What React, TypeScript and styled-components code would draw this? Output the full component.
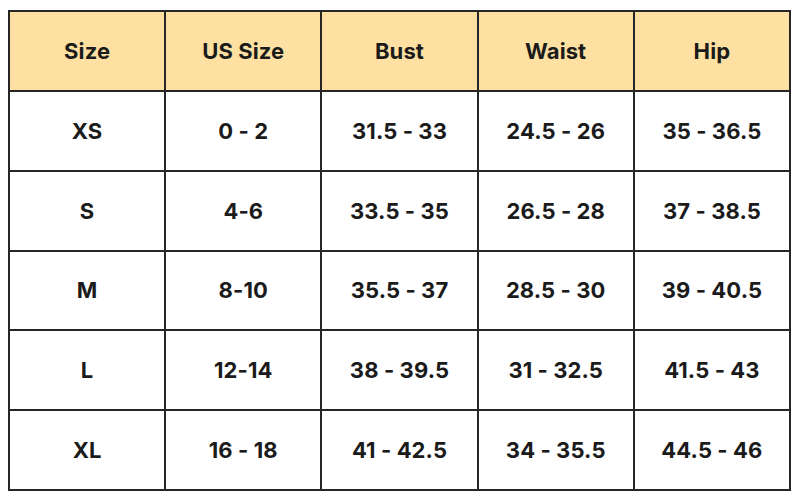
import React from 'react';
import styled, {createGlobalStyle} from 'styled-components';

const GlobalStyle = createGlobalStyle`
  html, body {
    margin: 0;
    padding: 0;
    background: #fff;
  }
  body {
    font-family: Inter, "Open Sans", "Liberation Sans", sans-serif;
  }
`

const Page = styled.div`
  width: 800px;
  height: 500px;
  padding: 10px 0 0 8px;
  box-sizing: border-box;
`

const Table = styled.div`
  width: 783px;
  height: 481px;
  box-sizing: border-box;
  display: grid;
  grid-template-columns: repeat(5, 1fr);
  grid-template-rows: repeat(6, 1fr);
  gap: 2px;
  padding: 2px;
  background: #262626;
`

const Cell = styled.div<{ $head?: boolean }>`
  background: ${p => p.$head ? '#fee1a2' : '#fff'};
  display: flex;
  align-items: center;
  justify-content: center;
  font-size: 22px;
  font-weight: 700;
  color: #1b1b1b;
  letter-spacing: 0.1px;
`

const header = ['Size', 'US Size', 'Bust', 'Waist', 'Hip']

const rows = [
  ['XS', '0 - 2', '31.5 - 33', '24.5 - 26', '35 - 36.5'],
  ['S', '4-6', '33.5 - 35', '26.5 - 28', '37 - 38.5'],
  ['M', '8-10', '35.5 - 37', '28.5 - 30', '39 - 40.5'],
  ['L', '12-14', '38 - 39.5', '31 - 32.5', '41.5 - 43'],
  ['XL', '16 - 18', '41 - 42.5', '34 - 35.5', '44.5 - 46'],
]

export default function App() {
  return <Page>
    <GlobalStyle/>
    <Table>
      {header.map(h => <Cell $head key={h}>{h}</Cell>)}
      {rows.map((r, i) => r.map((v, j) => <Cell key={i + '-' + j}>{v}</Cell>))}
    </Table>
  </Page>
}
